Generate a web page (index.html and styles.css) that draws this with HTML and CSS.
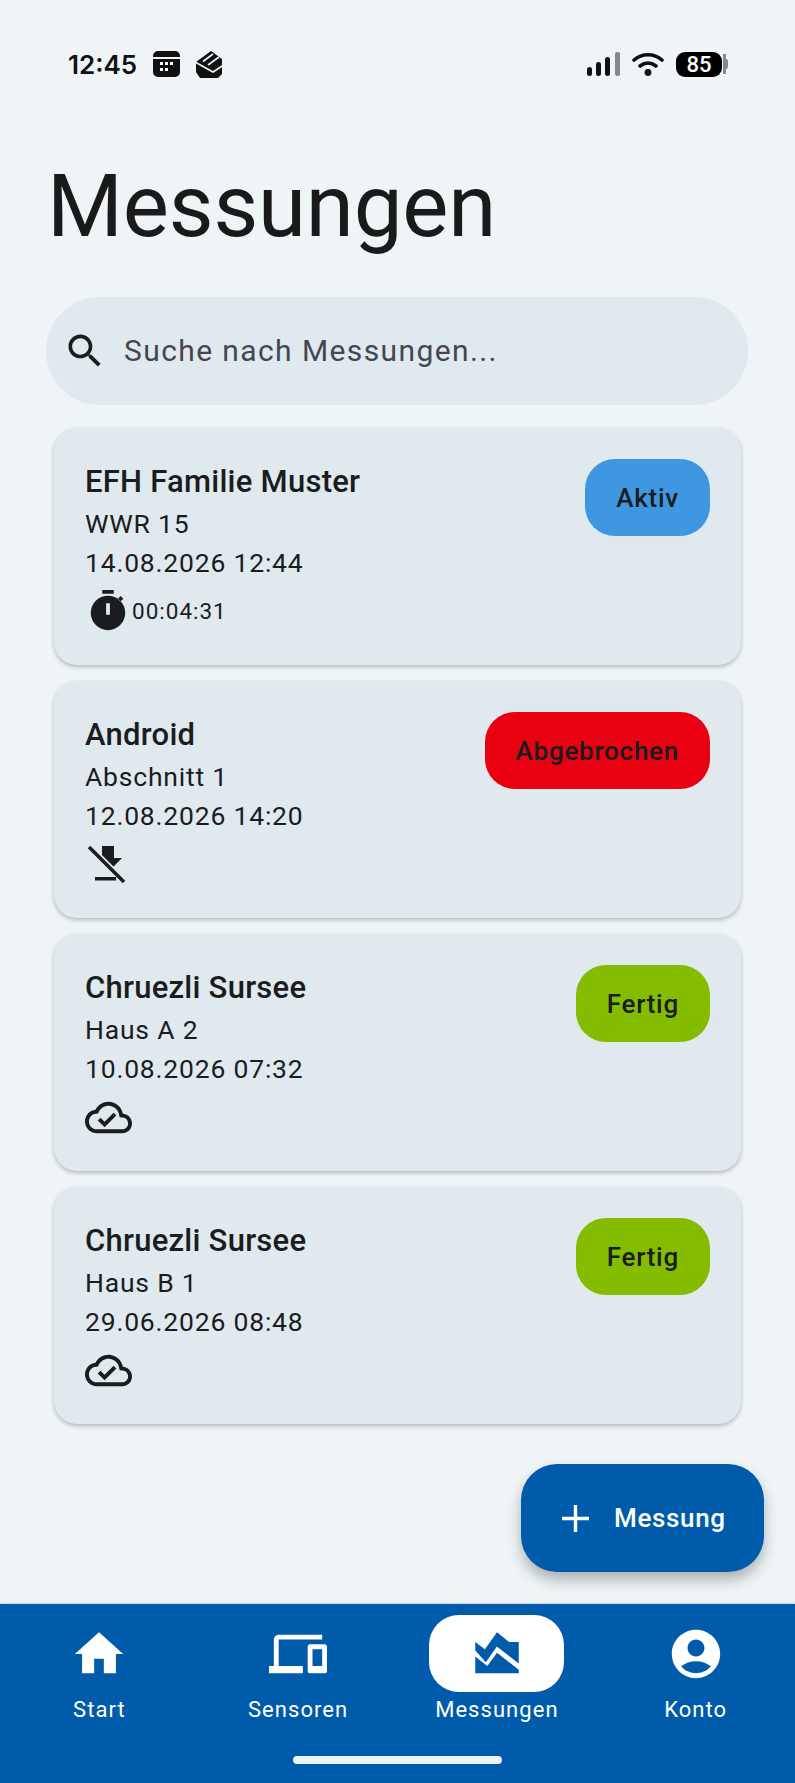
FILE: index.html
```html
<!DOCTYPE html>
<html lang="de">
<head>
<meta charset="utf-8">
<title>Messungen</title>
<link rel="stylesheet" href="styles.css">
</head>
<body>
<div class="page">
  <div class="status">
    <div class="status-left">
      <span class="clock">12:45</span>
      <svg class="st-cal" viewBox="0 0 27 26"><path fill="#111" d="M5 0h17a5 5 0 0 1 5 5v1H0V5a5 5 0 0 1 5-5zM0 8h27v13a5 5 0 0 1-5 5H5a5 5 0 0 1-5-5z"/><g fill="#fff"><rect x="7" y="11" width="3" height="3"/><rect x="12" y="11" width="3" height="3"/><rect x="17" y="11" width="3" height="3"/><rect x="7" y="17" width="3" height="3"/><rect x="12" y="17" width="3" height="3"/></g></svg>
      <svg class="st-app" viewBox="0 0 28 27"><path fill="#111" d="M1 11 16 0l11 8v15l-4 4H5l-4-6z"/><path fill="none" stroke="#eff5f7" stroke-width="1.600" d="M0 11l18 10 10-6.500M8 10.500 18 3M13 14 24 6"/></svg>
    </div>
    <div class="status-right">
      <svg class="st-signal" viewBox="0 0 33 24"><rect x="0" y="15" width="5" height="9" rx="2.500" fill="#111"/><rect x="9" y="10" width="5" height="14" rx="2.500" fill="#111"/><rect x="18" y="5" width="5" height="19" rx="2.500" fill="#111"/><rect x="28" y="0" width="5" height="24" rx="2" fill="#888"/></svg>
      <svg class="st-wifi" viewBox="0 0 32 24"><path fill="none" stroke="#111" stroke-width="3.600" stroke-linecap="round" d="M2 8C10 1 22 1 30 8M8 14c5-4 11-4 16 0"/><circle cx="16" cy="20.500" r="3.400" fill="#111"/></svg>
      <div class="battery"><span class="battery-body">85</span><span class="battery-end"></span><span class="battery-nub"></span></div>
    </div>
  </div>

  <h1 class="title">Messungen</h1>

  <div class="search">
    <svg class="search-icon" viewBox="0 0 24 24"><path d="M15.500 14h-.79l-.28-.27C15.410 12.590 16 11.110 16 9.500 16 5.910 13.090 3 9.500 3S3 5.910 3 9.500 5.910 16 9.500 16c1.610 0 3.090-.59 4.230-1.570l.27.28v.79l5 4.990L20.490 19l-4.990-5zm-6 0C7.010 14 5 11.990 5 9.500S7.010 5 9.500 5 14 7.010 14 9.500 11.990 14 9.500 14z"/></svg>
    <span class="search-text">Suche nach Messungen...</span>
  </div>

  <div class="list">
    <article class="card">
      <div class="card-main">
        <div class="card-title">EFH Familie Muster</div>
        <div class="card-line">WWR 15</div>
        <div class="card-line">14.08.2026 12:44</div>
        <div class="card-foot">
          <svg class="ic-timer" viewBox="0 0 24 24"><path fill-rule="evenodd" d="M9 1h6v2H9zM12 4a9 9 0 1 0 0 18 9 9 0 0 0 0-18zM11 8h2v6h-2zM18.600 4.200l1.400 1.400-1.500 1.500-1.400-1.400z"/></svg>
          <span class="timer-text">00:04:31</span>
        </div>
      </div>
      <div class="badge badge-blue">Aktiv</div>
    </article>

    <article class="card">
      <div class="card-main">
        <div class="card-title">Android</div>
        <div class="card-line">Abschnitt 1</div>
        <div class="card-line">12.08.2026 14:20</div>
        <div class="card-foot">
          <svg class="ic-off" viewBox="0 0 40 40"><path d="M16 2h12v12h8l-8.500 8.500L16 11z"/><path d="M9 33h21v3.500H9z"/><path fill="none" stroke="#1a1c1e" stroke-width="3.600" d="M3 3l35 35"/></svg>
        </div>
      </div>
      <div class="badge badge-red">Abgebrochen</div>
    </article>

    <article class="card">
      <div class="card-main">
        <div class="card-title">Chruezli Sursee</div>
        <div class="card-line">Haus A 2</div>
        <div class="card-line">10.08.2026 07:32</div>
        <div class="card-foot">
          <svg class="ic-cloud" viewBox="0 0 24 24"><path d="M19.350 10.040C18.670 6.590 15.640 4 12 4 9.110 4 6.600 5.640 5.350 8.040 2.340 8.360 0 10.910 0 14c0 3.310 2.690 6 6 6h13c2.760 0 5-2.240 5-5 0-2.640-2.050-4.780-4.650-4.960zM19 18H6c-2.210 0-4-1.790-4-4 0-2.050 1.530-3.760 3.560-3.970l1.070-.11.5-.95C8.080 7.140 9.940 6 12 6c2.620 0 4.880 1.860 5.390 4.430l.3 1.500 1.530.11c1.560.1 2.780 1.410 2.780 2.960 0 1.650-1.350 3-3 3zm-9-3.820l-2.090-2.090L6.500 13.500 10 17l6.010-6.010-1.410-1.410z"/></svg>
        </div>
      </div>
      <div class="badge badge-green">Fertig</div>
    </article>

    <article class="card">
      <div class="card-main">
        <div class="card-title">Chruezli Sursee</div>
        <div class="card-line">Haus B 1</div>
        <div class="card-line">29.06.2026 08:48</div>
        <div class="card-foot">
          <svg class="ic-cloud" viewBox="0 0 24 24"><path d="M19.350 10.040C18.670 6.590 15.640 4 12 4 9.110 4 6.600 5.640 5.350 8.040 2.340 8.360 0 10.910 0 14c0 3.310 2.690 6 6 6h13c2.760 0 5-2.240 5-5 0-2.640-2.050-4.780-4.650-4.960zM19 18H6c-2.210 0-4-1.790-4-4 0-2.050 1.530-3.760 3.560-3.970l1.070-.11.5-.95C8.080 7.140 9.940 6 12 6c2.620 0 4.880 1.860 5.390 4.430l.3 1.500 1.530.11c1.560.1 2.780 1.410 2.780 2.960 0 1.650-1.350 3-3 3zm-9-3.820l-2.090-2.090L6.500 13.500 10 17l6.010-6.010-1.410-1.410z"/></svg>
        </div>
      </div>
      <div class="badge badge-green">Fertig</div>
    </article>
  </div>

  <div class="fab">
    <svg class="fab-icon" viewBox="0 0 27 27"><path d="M11.800 0h3.400v11.800H27v3.400H15.200V27h-3.400V15.200H0v-3.400h11.800z"/></svg>
    <span class="fab-text">Messung</span>
  </div>

  <nav class="nav">
    <div class="nav-item">
      <div class="nav-pill"><svg class="nav-icon" viewBox="0 0 24 24"><path d="M10 20v-6h4v6h5v-8h3L12 3 2 12h3v8z"/></svg></div>
      <span class="nav-label">Start</span>
    </div>
    <div class="nav-item">
      <div class="nav-pill"><svg class="nav-icon" viewBox="0 0 24 24"><path d="M4 6h18V4H4c-1.100 0-2 .9-2 2v11H0v3h14v-3H4V6zm19 2h-6c-.55 0-1 .45-1 1v10c0 .55.45 1 1 1h6c.55 0 1-.45 1-1V9c0-.55-.45-1-1-1zm-1 9h-4v-7h4v7z"/></svg></div>
      <span class="nav-label">Sensoren</span>
    </div>
    <div class="nav-item">
      <div class="nav-pill nav-pill-active"><svg class="nav-icon" viewBox="0 0 24 24"><path d="M3 13v7h18v-1.500l-9-7L8 17 3 13zM3 7l4 3 5-7 5 4h4v8.970l-9.030-7.040-4.610 6.450L3 10.510V7z"/></svg></div>
      <span class="nav-label">Messungen</span>
    </div>
    <div class="nav-item">
      <div class="nav-pill"><svg class="nav-icon" viewBox="0 0 24 24"><path d="M12 2C6.480 2 2 6.480 2 12s4.480 10 10 10 10-4.480 10-10S17.520 2 12 2zm0 4c1.930 0 3.500 1.570 3.500 3.500S13.930 13 12 13s-3.500-1.570-3.500-3.500S10.070 6 12 6zm0 14c-2.030 0-4.430-.82-6.140-2.880C7.550 15.800 9.680 15 12 15s4.450.8 6.140 2.120C16.430 19.180 14.030 20 12 20z"/></svg></div>
      <span class="nav-label">Konto</span>
    </div>
    <div class="home-bar"></div>
  </nav>
</div>
</body>
</html>
```

FILE: styles.css
```css
* { box-sizing: border-box; }
html, body { margin: 0; padding: 0; }
body {
  background: #eff5f7;
  color: #1a1c1e;
  font-family: Roboto, "Noto Sans", sans-serif;
}
.page {
  position: relative;
  width: 795px;
  height: 1783px;
  display: flex;
  flex-direction: column;
  overflow: hidden;
}
.status {
  height: 52px;
  margin-top: 38px;
  padding: 0 67px 0 68px;
  display: flex;
  justify-content: space-between;
  align-items: center;
  flex: none;
}
.status-left, .status-right { display: flex; align-items: center; }
.clock {
  font-family: Inter, Roboto, sans-serif;
  font-size: 26px;
  font-weight: 600;
  color: #111;
  width: 85px;
  padding-top: 1px;
}
.st-cal { width: 27px; height: 26px; margin-right: 15px; }
.st-app { width: 28px; height: 27px; }
.st-signal { width: 33px; height: 24px; margin-right: 12px; }
.st-wifi { width: 32px; height: 24px; margin-right: 12px; }
.battery { display: flex; align-items: center; }
.battery-body {
  width: 46px;
  height: 25px;
  background: #000;
  border-radius: 9px;
  color: #fff;
  font-size: 22px;
  font-weight: 500;
  line-height: 25px;
  text-align: center;
}
.battery-end { width: 3px; height: 20px; background: #888; margin-left: 1px; }
.battery-nub { width: 2px; height: 10px; background: #888; border-radius: 0 2px 2px 0; }
.title {
  margin: 66px 0 0 47px;
  font-size: 87px;
  font-weight: 400;
  letter-spacing: -0.2px;
  line-height: 100px;
  color: #1a1a1a;
  flex: none;
}
.search {
  margin: 41px 47px 0 46px;
  height: 108px;
  border-radius: 54px;
  background: #e0e9ee;
  display: flex;
  align-items: center;
  padding-left: 17px;
  flex: none;
}
.search-icon { width: 44px; height: 44px; fill: #1a1c1e; }
.search-text {
  margin-left: 17px;
  margin-bottom: 2px;
  font-size: 30px;
  letter-spacing: 1.4px;
  color: #45464f;
}
.list {
  margin: 23px 54px 0;
  display: flex;
  flex-direction: column;
  gap: 16px;
  flex: none;
}
.card {
  height: 237px;
  border-radius: 23px;
  background: #e0e9ee;
  box-shadow: 0 2px 4px rgba(0, 0, 0, 0.25);
  padding: 31px;
  display: flex;
  justify-content: space-between;
  align-items: flex-start;
}
.card-main { display: flex; flex-direction: column; }
.card-title { font-size: 31px; font-weight: 500; line-height: 44px; letter-spacing: 0.25px; margin-top: 1px; margin-bottom: 1px; }
.card-line { font-size: 26.500px; line-height: 38.500px; letter-spacing: 0.8px; }
.card-foot { display: flex; align-items: center; height: 50px; margin-top: 4px; }
.ic-timer { width: 46px; height: 46px; fill: #1a1c1e; }
.timer-text { font-size: 22.500px; letter-spacing: 1px; margin-left: 1px; }
.ic-off { width: 40px; height: 40px; fill: #1a1c1e; margin-left: 1px; }
.ic-cloud { width: 47px; height: 47px; fill: #1a1c1e; }
.badge {
  height: 77px;
  border-radius: 30px;
  padding: 0 31px;
  display: flex;
  align-items: center;
  font-size: 26px;
  font-weight: 500;
  letter-spacing: 0.75px;
  color: #1a1c1e;
}
.badge-blue { background: #3f97e2; }
.badge-red { background: #e90011; }
.badge-green { background: #84bc00; }
.fab {
  position: absolute;
  left: 521px;
  top: 1464px;
  width: 243px;
  height: 108px;
  border-radius: 36px;
  background: #005baa;
  box-shadow: 0 8px 14px rgba(0, 0, 0, 0.28);
  display: flex;
  align-items: center;
  padding-left: 41px;
  color: #fff;
}
.fab-icon { width: 27px; height: 27px; fill: #fff; }
.fab-text { margin-left: 25px; font-size: 26px; font-weight: 500; letter-spacing: 0.65px; }
.nav {
  position: relative;
  margin-top: auto;
  height: 179px;
  background: #005baa;
  box-shadow: 0 -1px 2px rgba(0, 0, 0, 0.15);
  display: grid;
  grid-template-columns: repeat(4, 1fr);
  padding-top: 11px;
  flex: none;
  align-items: start;
}
.nav-item { display: flex; flex-direction: column; align-items: center; }
.nav-pill {
  width: 135px;
  height: 77px;
  border-radius: 30px;
  display: flex;
  align-items: center;
  justify-content: center;
}
.nav-pill-active { background: #fff; }
.nav-icon { width: 58px; height: 58px; fill: #fff; }
.nav-pill-active .nav-icon { fill: #005baa; }
.nav-label {
  margin-top: 2px;
  font-size: 22px;
  line-height: 32px;
  letter-spacing: 1.05px;
  color: #fff;
}
.home-bar {
  position: absolute;
  left: 293px;
  top: 152px;
  width: 209px;
  height: 8px;
  border-radius: 4px;
  background: #eff5f7;
}
```
